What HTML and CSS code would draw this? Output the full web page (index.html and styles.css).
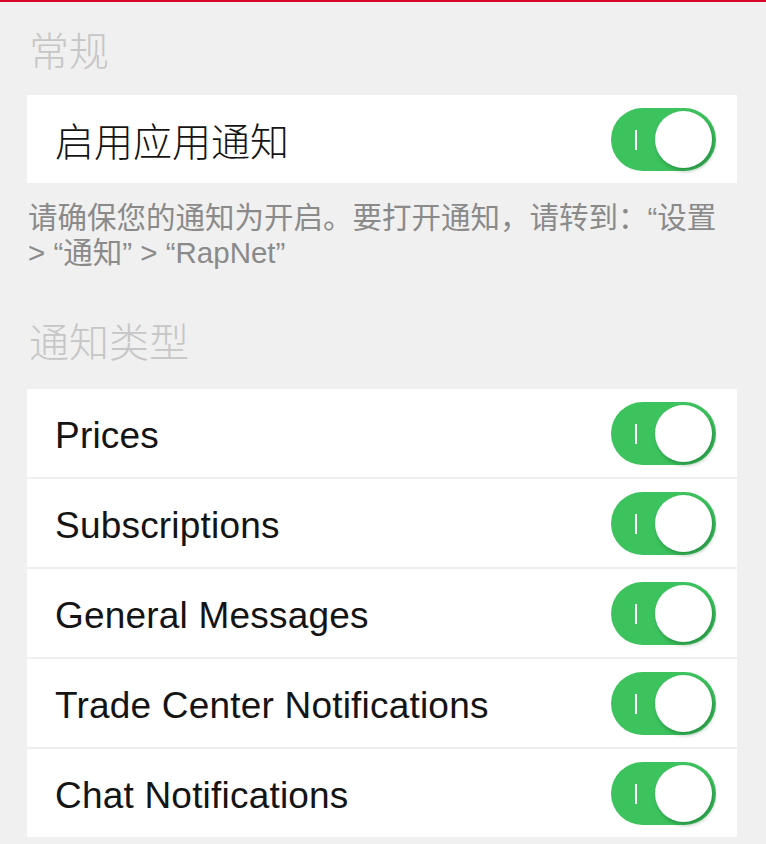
FILE: index.html
```html
<!DOCTYPE html>
<html lang="zh-CN">
<head>
<meta charset="utf-8">
<title>通知设置</title>
<link rel="stylesheet" href="styles.css">
</head>
<body>
<div class="topbar"></div>
<main class="page">
  <section class="group">
    <h2 class="group-title">常规</h2>
    <div class="card">
      <div class="row">
        <span class="label cjk">启用应用通知</span>
        <span class="switch on"><span class="knob"></span></span>
      </div>
    </div>
    <p class="note">请确保您的通知为开启。要打开通知，请转到：“设置<br>&gt; “通知” &gt; “RapNet”</p>
  </section>
  <section class="group">
    <h2 class="group-title">通知类型</h2>
    <div class="card">
      <div class="row">
        <span class="label">Prices</span>
        <span class="switch on"><span class="knob"></span></span>
      </div>
      <div class="row">
        <span class="label">Subscriptions</span>
        <span class="switch on"><span class="knob"></span></span>
      </div>
      <div class="row">
        <span class="label">General Messages</span>
        <span class="switch on"><span class="knob"></span></span>
      </div>
      <div class="row">
        <span class="label">Trade Center Notifications</span>
        <span class="switch on"><span class="knob"></span></span>
      </div>
      <div class="row">
        <span class="label">Chat Notifications</span>
        <span class="switch on"><span class="knob"></span></span>
      </div>
    </div>
  </section>
</main>
</body>
</html>
```

FILE: styles.css
```css
html, body {
  margin: 0;
  padding: 0;
}
body {
  background: #f0f0f0;
  font-family: "Liberation Sans", "Noto Sans CJK SC", sans-serif;
  color: #000;
  width: 766px;
  height: 844px;
  overflow: hidden;
}
.topbar {
  height: 1px;
  border-bottom: 1px solid rgba(217, 4, 43, 0.35);
  background: #d9042b;
}
.page {
  padding: 0 29px 0 27px;
}
.group-title {
  margin: 0;
  font-family: "Noto Sans CJK SC", sans-serif;
  font-weight: 300;
  font-size: 40px;
  line-height: 40px;
  color: #c6c6c6;
  padding: 27px 0 26px 2px;
}
.group + .group .group-title {
  padding-bottom: 29px;
}
.card {
  background: #fff;
  display: flex;
  flex-direction: column;
  gap: 2px;
}
.card .row + .row {
  box-shadow: 0 -2px 0 #efefef;
}
.row {
  height: 88px;
  display: flex;
  align-items: center;
  justify-content: space-between;
  padding: 0 21px 0 28px;
  background: #fff;
}
.label {
  font-size: 37px;
  font-weight: 400;
  color: #141414;
  letter-spacing: 0.2px;
  padding-top: 6px;
}
.label.cjk {
  font-family: "Noto Sans CJK SC", sans-serif;
  font-weight: 300;
  font-size: 39px;
  letter-spacing: 0;
  padding-top: 0;
}
.switch {
  position: relative;
  width: 105px;
  height: 63px;
  border-radius: 32px;
  background: #3cc35e;
  flex: none;
}
.switch::before {
  content: "";
  position: absolute;
  left: 24px;
  top: 22px;
  width: 2px;
  height: 20px;
  background: #fff;
}
.knob {
  position: absolute;
  right: 4px;
  top: 3px;
  width: 57px;
  height: 57px;
  border-radius: 50%;
  background: #fff;
  box-shadow: 2px 3px 4px rgba(0, 60, 20, 0.35);
}
.note {
  margin: 0;
  padding: 17px 0 0 1px;
  height: 110px;
  box-sizing: border-box;
  font-size: 29.5px;
  line-height: 35px;
  color: #8a8a8a;
}
```
